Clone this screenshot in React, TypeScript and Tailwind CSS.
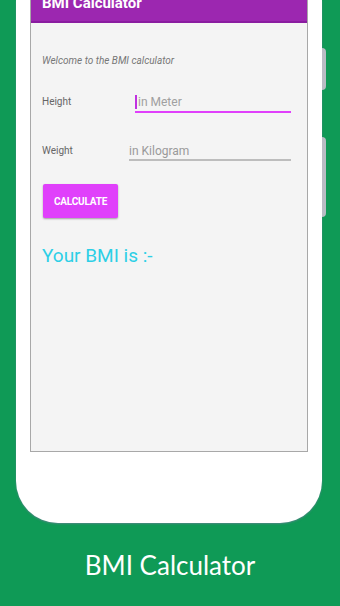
import React from 'react';

const App: React.FC = () => {
    return (
        <div className="w-[340px] h-[606px] bg-[#0f9a56] overflow-hidden flex flex-col" style={{ fontFamily: 'Roboto, "Liberation Sans", sans-serif' }}>
            {/* phone body */}
            <div className="relative ml-[16px] w-[306px] h-[523px] bg-white rounded-b-[42px] px-[14px] shadow-[0_1px_2px_rgba(120,120,160,0.6)]">
                {/* side buttons */}
                <div className="absolute right-[-4px] top-[48px] w-[4px] h-[42px] bg-[#b9bcc4] rounded-r-sm" />
                <div className="absolute right-[-4px] top-[137px] w-[4px] h-[80px] bg-[#b9bcc4] rounded-r-sm" />

                {/* screen */}
                <div className="w-[278px] h-[452px] bg-[#f4f4f4] border border-[#a8a8a8] border-t-0 flex flex-col overflow-hidden">
                    <div className="h-[23px] shrink-0 bg-[#9c27b0] border-b-2 border-[#8a1ca0] px-[11px] overflow-hidden">
                        <div className="text-white font-bold text-[15px] leading-none -mt-[4px]">BMI Calculator</div>
                    </div>

                    <div className="pl-[11px] pr-[16px]">
                        <div className="mt-[33px] text-[10px] italic text-[#777] leading-none">Welcome to the BMI calculator</div>

                        <div className="mt-[27px] flex items-start">
                            <div className="w-[93px] h-[18px] text-[10px] text-[#666] leading-[18px]">Height</div>
                            <div className="flex-1 h-[20px] border-b-2 border-[#e040fb] flex items-center">
                                <div className="w-[2px] h-[14px] bg-[#c030e0] mr-[1px]" />
                                <span className="text-[12px] text-[#a0a0a0] leading-none">in Meter</span>
                            </div>
                        </div>

                        <div className="mt-[30px] flex items-start">
                            <div className="w-[87px] h-[16px] text-[10px] text-[#666] leading-[16px]">Weight</div>
                            <div className="flex-1 h-[18px] border-b-2 border-[#bdbdbd] text-[12px] text-[#9a9a9a] leading-[16px]">
                                in Kilogram
                            </div>
                        </div>

                        <button className="mt-[23px] ml-[1px] w-[75px] h-[34px] bg-[#e040fb] rounded-[2px] shadow-[0_1px_2px_rgba(0,0,0,0.35)] text-white font-bold text-[10px] tracking-[-0.2px]">
                            CALCULATE
                        </button>

                        <div className="mt-[28px] text-[19px] text-[#2ccfe6] leading-none">Your BMI is :-</div>
                    </div>
                </div>
            </div>

            <div className="mt-[29px] text-center text-white text-[26px] leading-none" style={{ fontFamily: 'Lato, "Open Sans", sans-serif' }}>
                BMI Calculator
            </div>
        </div>
    );
};

export default App;
